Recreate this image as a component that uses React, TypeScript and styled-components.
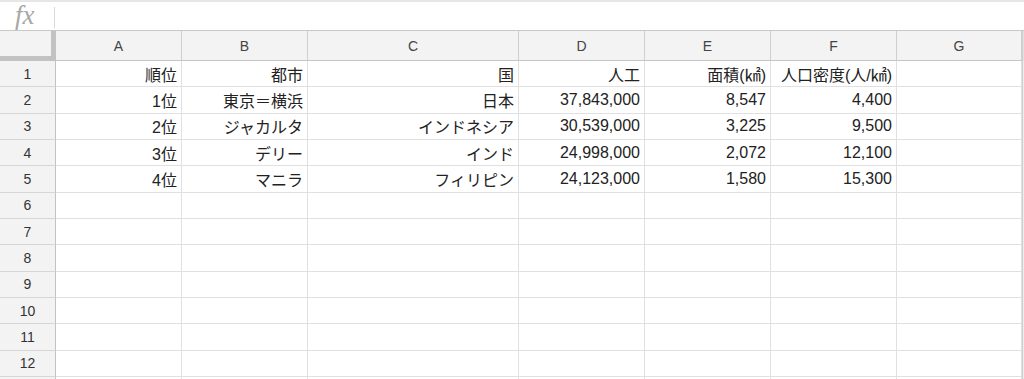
import styled, { createGlobalStyle } from "styled-components"

const Global = createGlobalStyle`
    html, body {
        margin: 0;
        padding: 0;
        background: #fff;
        overflow: hidden;
    }
    body {
        font-family: "Liberation Sans", Arial, "Noto Sans CJK JP", sans-serif;
    }
`

const Page = styled.div`
    width: 1024px;
    height: 379px;
    overflow: hidden;
    background: #fff;
`

const TopStrip = styled.div`
    height: 2px;
    background: #e6e6e6;
`

const FormulaBar = styled.div`
    height: 28px;
    display: flex;
    align-items: center;
    border-bottom: 1px solid #c8c8c8;
`

const FxLabel = styled.div`
    width: 54px;
    height: 28px;
    padding-left: 15px;
    box-sizing: border-box;
    font-family: "Liberation Serif", serif;
    font-style: italic;
    font-size: 27px;
    color: #a8a8a8;
    line-height: 26px;
`

const FxDivider = styled.div`
    width: 1px;
    height: 21px;
    margin-top: 2px;
    background: #d8d8d8;
`

const Sheet = styled.div`
    display: grid;
    grid-template-columns: 56px 126px 126px 211px 126px 126px 126px 125px 2px;
    grid-template-rows: 30px repeat(13, 26.33px);
`

const Corner = styled.div`
    background: #f3f3f3;
    border-right: 5px solid #c2c2c2;
    border-bottom: 5px solid #c2c2c2;
    box-sizing: border-box;
`

const ColHeader = styled.div`
    background: #f3f3f3;
    border-right: 1px solid #cfcfcf;
    border-bottom: 1px solid #c6c6c6;
    box-sizing: border-box;
    display: flex;
    align-items: center;
    justify-content: center;
    font-size: 14px;
    color: #444;
`

const RowHeader = styled.div`
    background: #f3f3f3;
    border-right: 1px solid #c2c2c2;
    border-bottom: 1px solid #d6d6d6;
    box-sizing: border-box;
    display: flex;
    align-items: center;
    justify-content: center;
    font-size: 14px;
    color: #333;
`

const Cell = styled.div`
    border-right: 1px solid #e0e0e0;
    border-bottom: 1px solid #e0e0e0;
    box-sizing: border-box;
    display: flex;
    align-items: center;
    justify-content: flex-end;
    padding-right: 4px;
    font-size: 16px;
    color: #222;
    white-space: nowrap;
`

const Edge = styled.div<{ $head?: boolean }>`
    background: ${(p) => (p.$head ? "#e2e2e2" : "#eeeeee")};
    border-left: 1px solid #cfcfcf;
`

const columns = ["A", "B", "C", "D", "E", "F", "G"]

const data: string[][] = [
    ["順位", "都市", "国", "人工", "面積(㎢)", "人口密度(人/㎢)", ""],
    ["1位", "東京＝横浜", "日本", "37,843,000", "8,547", "4,400", ""],
    ["2位", "ジャカルタ", "インドネシア", "30,539,000", "3,225", "9,500", ""],
    ["3位", "デリー", "インド", "24,998,000", "2,072", "12,100", ""],
    ["4位", "マニラ", "フィリピン", "24,123,000", "1,580", "15,300", ""],
]

// 12 visible rows plus a sliver of the 13th at the bottom edge
const VISIBLE = 12

const App = () => {
    const rows = Array.from({ length: VISIBLE + 1 }, (_, i) => data[i] ?? columns.map(() => ""))
    return <Page>
        <Global />
        <TopStrip />
        <FormulaBar>
            <FxLabel>fx</FxLabel>
            <FxDivider />
        </FormulaBar>
        <Sheet>
            <Corner />
            {columns.map((c) => <ColHeader key={`col-${c}`}>{c}</ColHeader>)}
            <Edge $head />
            {rows.map((row, r) => [
                <RowHeader key={`rh-${r}`}>{r < VISIBLE ? r + 1 : ""}</RowHeader>,
                ...row.map((v, c) => <Cell key={`cell-${r}-${c}`}>{v}</Cell>),
                <Edge key={`edge-${r}`} />,
            ])}
        </Sheet>
    </Page>
}

export default App
